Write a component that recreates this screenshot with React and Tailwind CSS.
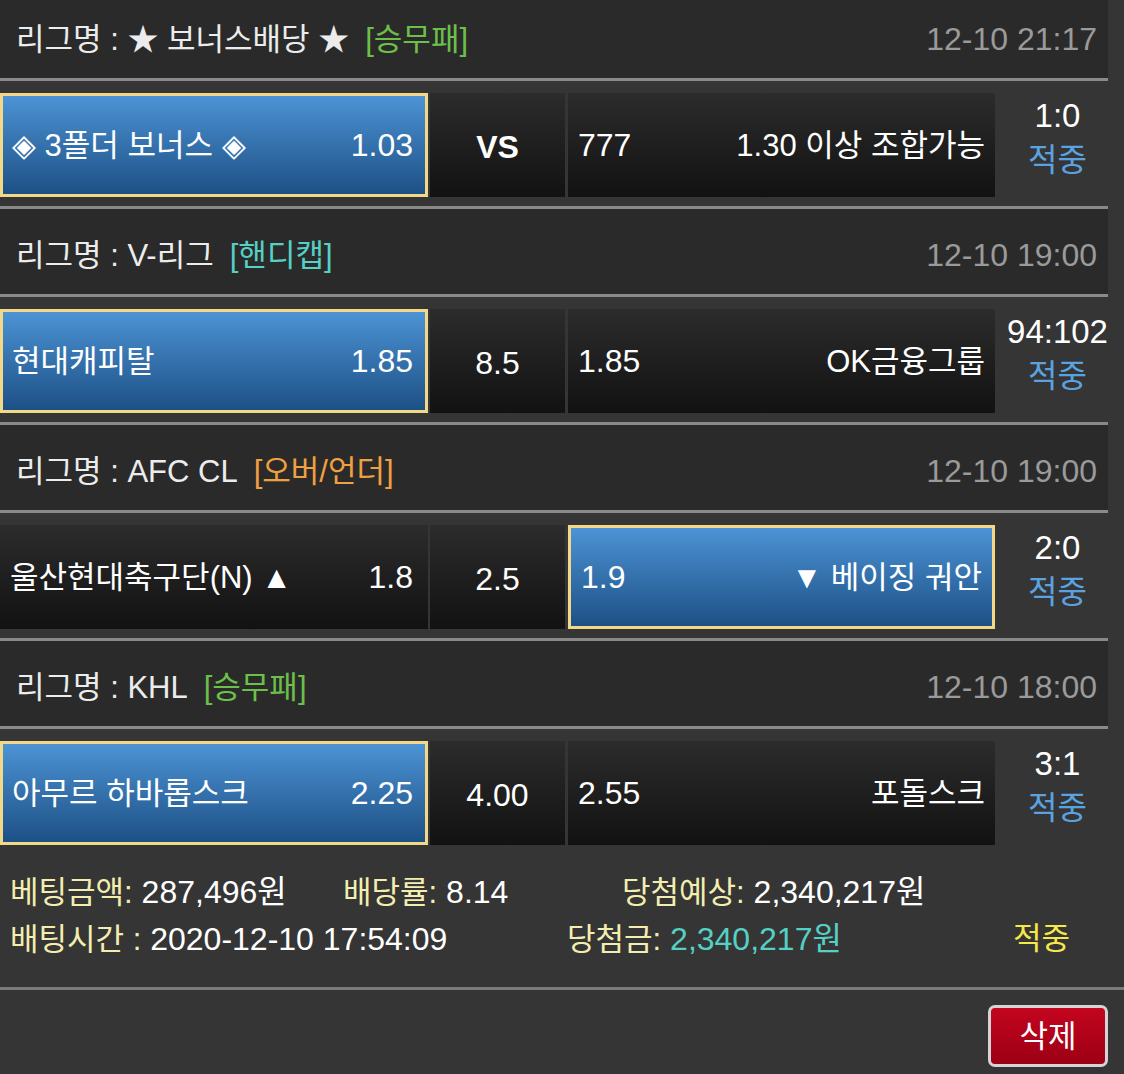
const matches = [
  {
    league: '★ 보너스배당 ★',
    type: '[승무패]',
    typeColor: 'text-[#6cc04a]',
    time: '12-10 21:17',
    home: '◈ 3폴더 보너스 ◈',
    homeOdds: '1.03',
    mid: 'VS',
    midBold: true,
    awayOdds: '777',
    away: '1.30 이상 조합가능',
    pick: null,
    score: '1:0',
    first: true,
  },
  {
    league: 'V-리그',
    type: '[핸디캡]',
    typeColor: 'text-[#56d0c4]',
    time: '12-10 19:00',
    home: '현대캐피탈',
    homeOdds: '1.85',
    mid: '8.5',
    awayOdds: '1.85',
    away: 'OK금융그룹',
    pick: 'home',
    score: '94:102',
  },
  {
    league: 'AFC CL',
    type: '[오버/언더]',
    typeColor: 'text-[#f0a040]',
    time: '12-10 19:00',
    home: '울산현대축구단(N) ▲',
    homeOdds: '1.8',
    mid: '2.5',
    awayOdds: '1.9',
    away: '▼ 베이징 궈안',
    pick: 'away',
    score: '2:0',
  },
  {
    league: 'KHL',
    type: '[승무패]',
    typeColor: 'text-[#6cc04a]',
    time: '12-10 18:00',
    home: '아무르 하바롭스크',
    homeOdds: '2.25',
    mid: '4.00',
    awayOdds: '2.55',
    away: '포돌스크',
    pick: 'home',
    score: '3:1',
  },
]

const selected = 'bg-gradient-to-b from-[#4d93d5] to-[#1d5186] border-[3px] border-[#f2d98a]'
const plain = 'bg-gradient-to-b from-[#2c2c2c] to-[#121212]'

function Line() {
  return <div className="w-[1108px] h-[3px] bg-[#8a8a8a]" />
}

function MatchBlock({ m }) {
  // 첫번째 경기만 선택 표시가 home 쪽 (보너스)
  const homeSel = m.pick === 'home' || m.first
  const awaySel = m.pick === 'away'
  return (
    <>
      <div className={`w-[1108px] bg-[#2a2a2a] flex items-center justify-between pl-4 pr-[11px] ${m.first ? 'h-[78px]' : 'h-[85px] pt-[7px]'}`}>
        <div className="flex items-center text-[#ececec]">
          <span>리그명 : {m.league}</span>
          <span className={`ml-4 ${m.typeColor}`}>{m.type}</span>
        </div>
        <span className="text-[#9a9a9a] text-[32px]">{m.time}</span>
      </div>
      <Line />
      <div className="h-[125px] pt-[12px] flex">
        <div className={`w-[428px] h-[104px] flex items-center justify-between ${homeSel ? selected + ' pl-[9px] pr-[12px]' : plain + ' pl-[10px] pr-[15px]'}`}>
          <span>{m.home}</span>
          <span className="text-[32px]">{m.homeOdds}</span>
        </div>
        <div className={`ml-[2px] w-[135px] h-[104px] flex items-center justify-center pt-1 text-[32px] ${plain} ${m.midBold ? 'font-bold' : ''}`}>
          {m.mid}
        </div>
        <div className={`ml-[3px] w-[427px] h-[104px] flex items-center justify-between ${awaySel ? selected + ' pl-[10px] pr-[10px]' : plain + ' pl-[10px] pr-[10px]'}`}>
          <span className="text-[32px]">{m.awayOdds}</span>
          <span>{m.away}</span>
        </div>
        <div className="w-[125px] h-[104px] flex flex-col items-center leading-[45px] text-[33px]">
          <span>{m.score}</span>
          <span className="text-[#5ba3e0] text-[32px]">적중</span>
        </div>
      </div>
    </>
  )
}

export default function App() {
  return (
    <div
      className="w-[1124px] h-[1074px] overflow-hidden bg-[#353535] text-white text-[31px] leading-none"
      style={{ fontFamily: '"Liberation Sans", "Noto Sans CJK KR", sans-serif' }}
    >
      {matches.map((m, i) => (
        <div key={i}>
          <MatchBlock m={m} />
          {i < matches.length - 1 && <Line />}
        </div>
      ))}

      <div className="pl-[10px] pt-[15px] pb-[24px] leading-[46px] text-[32px]">
        <div className="flex">
          <div className="w-[333px]"><span className="text-[#f3eeb0] text-[31px]">베팅금액:</span> 287,496원</div>
          <div className="w-[279px]"><span className="text-[#f3eeb0] text-[31px]">배당률:</span> 8.14</div>
          <div><span className="text-[#f3eeb0] text-[31px]">당첨예상:</span> 2,340,217원</div>
        </div>
        <div className="flex">
          <div className="w-[557px]"><span className="text-[#f3eeb0] text-[31px]">배팅시간 :</span> 2020-12-10 17:54:09</div>
          <div className="w-[446px]"><span className="text-[#f3eeb0] text-[31px]">당첨금:</span> <span className="text-[#56d0c4]">2,340,217원</span></div>
          <div className="text-[#f5e94a] text-[31px]">적중</div>
        </div>
      </div>

      <div className="w-full h-[3px] bg-[#7a7a7a]" />

      <div className="flex justify-end pr-4 pt-[15px]">
        <button className="w-[120px] h-[62px] rounded-[7px] border-[3px] border-[#d4d4d4] bg-gradient-to-b from-[#c4051f] to-[#9c0014] text-white text-[31px]">
          삭제
        </button>
      </div>
    </div>
  )
}
